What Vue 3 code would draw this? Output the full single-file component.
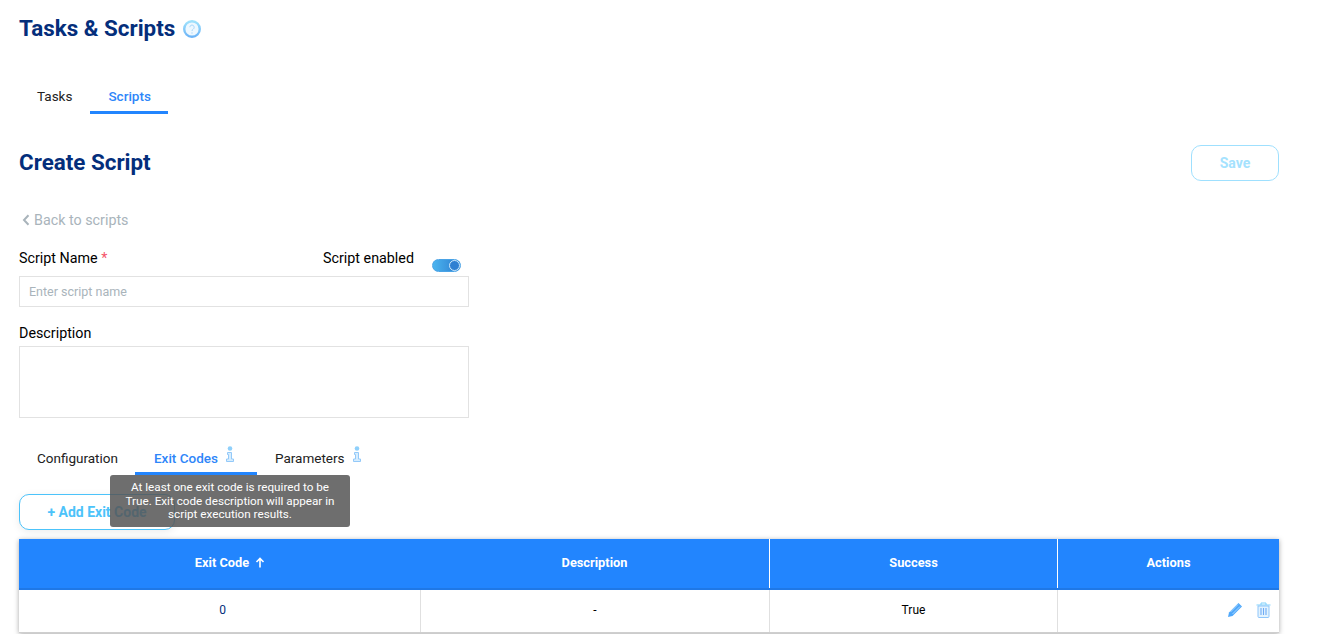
<script setup>
const mainTabs = [{ label: 'Tasks' }, { label: 'Scripts', active: true }]
const subTabs = [
  { label: 'Configuration' },
  { label: 'Exit Codes', active: true, info: true },
  { label: 'Parameters', info: true }
]
</script>

<template>
  <div class="page">
    <header class="title-row">
      <h1>Tasks &amp; Scripts</h1>
      <svg class="help" width="18" height="18" viewBox="0 0 18 18">
        <defs>
          <linearGradient id="helpGrad" x1="0" y1="0" x2="0" y2="1">
            <stop offset="0" stop-color="#9fe2fc" />
            <stop offset="1" stop-color="#6db4f7" />
          </linearGradient>
        </defs>
        <circle cx="9" cy="9" r="7.800" fill="#eef8ff" stroke="url(#helpGrad)" stroke-width="2.400" />
        <path d="M6.800 7.200a2.200 2.200 0 1 1 3.400 1.900c-.8.500-1.200.9-1.200 1.900" fill="none" stroke="#a9d8fb" stroke-width="1" />
        <circle cx="9" cy="13" r=".7" fill="#a9d8fb" />
      </svg>
    </header>

    <nav class="tabs main-tabs">
      <a v-for="t in mainTabs" :key="t.label" class="tab" :class="{ active: t.active }">{{ t.label }}</a>
    </nav>

    <div class="create-row">
      <h2>Create Script</h2>
      <button class="btn save">Save</button>
    </div>

    <a class="back">
      <svg width="8" height="12" viewBox="0 0 8 12"><path d="M6.500 1.200 2 6l4.500 4.800" fill="none" stroke="#a9b4bb" stroke-width="2" /></svg>
      Back to scripts
    </a>

    <section class="form">
      <div class="label-row">
        <label>Script Name <span class="req">*</span></label>
        <div class="enabled">
          <span>Script enabled</span>
          <span class="switch"><span class="knob"></span></span>
        </div>
      </div>
      <input class="field" placeholder="Enter script name" />
      <label class="desc-label">Description</label>
      <textarea class="field area"></textarea>
    </section>

    <nav class="tabs sub-tabs">
      <a v-for="t in subTabs" :key="t.label" class="tab" :class="{ active: t.active }">
        {{ t.label }}
        <svg v-if="t.info" class="info" width="8" height="16" viewBox="0 0 8 16">
          <circle cx="4" cy="2.500" r="2.300" fill="#8fd0fb" />
          <path d="M1.500 6.500h4v6.500h2v2.500H.5V13h2V8.500h-1z" fill="#d6edfe" stroke="#93c9f9" stroke-width="1" />
        </svg>
      </a>
      <div class="tooltip">At least one exit code is required to be True. Exit code description will appear in script execution results.</div>
    </nav>

    <button class="btn add">+ Add Exit Code</button>

    <div class="table">
      <div class="row head">
        <div class="cell span-two">
          <span class="exit-head">Exit Code
            <svg width="10" height="11" viewBox="0 0 10 11"><path d="M5 10.500V1.500M1.500 5 5 1.500 8.500 5" fill="none" stroke="#fff" stroke-width="1.600" /></svg>
          </span>
          <span class="desc-head">Description</span>
        </div>
        <div class="cell">Success</div>
        <div class="cell">Actions</div>
      </div>
      <div class="row body">
        <div class="cell code">0</div>
        <div class="cell">-</div>
        <div class="cell">True</div>
        <div class="cell actions">
          <svg width="16" height="16" viewBox="0 0 16 16">
            <path d="M1 15l1-4.500L11.500 1 15 4.500 5.500 14z" fill="#4fa8fb" />
            <path d="M3.500 10 11 2.500M5.500 12 13 4.500" stroke="#bfe2fe" stroke-width=".8" />
          </svg>
          <svg width="15" height="16" viewBox="0 0 15 16">
            <path d="M.5 3h14M5 3V1h5v2" fill="none" stroke="#7fd0fb" stroke-width="1" />
            <path d="M2 4h11v10.500a1 1 0 0 1-1 1H3a1 1 0 0 1-1-1z" fill="#e3f3fe" stroke="#8fc6fa" stroke-width="1" />
            <path d="M5 6v7M7.500 6v7M10 6v7" stroke="#6fabf4" stroke-width="1.100" />
          </svg>
        </div>
      </div>
    </div>
  </div>
</template>

<style>
html, body { background: #fff; margin: 0; }
</style>

<style scoped>
.page {
  box-sizing: border-box;
  width: 1328px;
  height: 634px;
  padding: 0 49px 0 19px;
  font-family: Roboto, "Liberation Sans", sans-serif;
  font-size: 14.3px;
  color: #000;
  overflow: hidden;
}
.title-row {
  display: flex;
  align-items: center;
  gap: 8px;
  height: 28px;
  padding-top: 14px;
}
h1 {
  margin: 0;
  font-size: 22.4px;
  line-height: 28px;
  font-weight: 700;
  color: #042e7b;
}
.help { margin-top: 2px; }
.tabs {
  display: flex;
  position: relative;
}
.tab {
  display: block;
  box-sizing: border-box;
  padding: 0 18px;
  line-height: 20px;
  color: #222;
  font-size: 13.500px;
  white-space: nowrap;
}
.tab.active {
  color: #2e86f9;
  font-weight: 500;
  border-bottom: 3px solid #2285fe;
}
.main-tabs {
  margin-top: 44px;
  height: 28px;
}
.main-tabs .tab { height: 28px; }
.main-tabs .tab.active { padding-right: 17px; }
.create-row {
  display: flex;
  justify-content: space-between;
  align-items: center;
  margin-top: 31px;
  height: 36px;
}
h2 {
  margin: -2px 0 0;
  font-size: 22.4px;
  font-weight: 700;
  color: #042e7b;
}
.btn {
  box-sizing: border-box;
  background: #fff;
  border-radius: 10px;
  font-family: inherit;
  font-weight: 700;
  font-size: 14px;
  padding: 0;
}
.save {
  width: 88px;
  height: 36px;
  border: 1px solid #9fe0fe;
  color: #a5e2fe;
}
.back {
  display: flex;
  align-items: center;
  gap: 4px;
  margin-top: 29px;
  padding-left: 3px;
  line-height: 20px;
  color: #a9b4bb;
}
.form { width: 450px; margin-top: 18px; }
.label-row {
  display: flex;
  justify-content: space-between;
  height: 20px;
  line-height: 20px;
}
.req { color: #f4546a; }
.enabled {
  display: flex;
  gap: 18px;
  padding-right: 8px;
}
.switch {
  position: relative;
  box-sizing: border-box;
  display: block;
  width: 29px;
  height: 13px;
  margin-top: 11px;
  border-radius: 7px;
  border: 1px solid #4aa3e6;
  background: linear-gradient(90deg, #4ab4ef, #2d7ccf);
}
.knob {
  position: absolute;
  right: 0;
  top: 0;
  box-sizing: border-box;
  width: 11px;
  height: 11px;
  border-radius: 50%;
  border: 1px solid #cfeafc;
  background: #2f80d2;
}
.field {
  display: block;
  box-sizing: border-box;
  width: 450px;
  height: 31px;
  margin-top: 8px;
  padding: 0 9px;
  border: 1px solid #e2e2e2;
  outline: none;
  font-family: inherit;
  font-size: 12.500px;
  background: #fff;
}
.field::placeholder { color: #a9b4bb; opacity: 1; }
.desc-label {
  display: block;
  margin-top: 16px;
  line-height: 20px;
}
.area {
  height: 72px;
  margin-top: 3px;
  resize: none;
}
.sub-tabs {
  margin-top: 28px;
  height: 29px;
}
.sub-tabs .tab {
  height: 29px;
  padding-top: 2px;
  display: flex;
  align-items: flex-start;
  gap: 8px;
}
.sub-tabs .tab.active {
  font-weight: 500;
  margin-left: -1px;
  padding-left: 19px;
}
.info { margin: -2px 5px 0 0; }
.tooltip {
  position: absolute;
  left: 91px;
  top: 29px;
  z-index: 2;
  box-sizing: border-box;
  width: 240px;
  height: 52px;
  padding: 6px 8px;
  border-radius: 3px;
  background: rgba(85, 85, 85, 0.85);
  color: #fff;
  font-size: 11.700px;
  line-height: 13.500px;
  text-align: center;
}
.add {
  display: block;
  width: 156px;
  height: 36px;
  margin-top: 19px;
  border: 1px solid #4cc3fa;
  color: #4cc3fa;
  box-shadow: 0 2px 8px rgba(0, 0, 0, 0.08);
}
.table {
  width: 1260px;
  margin-top: 9px;
  box-shadow: 0 1px 5px rgba(0, 0, 0, 0.35);
}
.row {
  display: grid;
  grid-template-columns: 401px 349px 288px 222px;
}
.cell {
  display: flex;
  align-items: center;
  justify-content: center;
}
.head {
  height: 51px;
  box-sizing: border-box;
  padding-bottom: 2px;
  background: #2285fe;
  border-bottom: 2px solid #1f78e6;
  color: #fff;
  font-size: 12.800px;
  font-weight: 700;
}
.head .cell + .cell { border-left: 1px solid #fff; margin-bottom: -2px; padding-bottom: 2px; }
.span-two {
  grid-column: span 2;
  display: grid;
  grid-template-columns: 401px 349px;
}
.exit-head {
  display: flex;
  align-items: center;
  justify-content: center;
  gap: 6px;
  padding-left: 21px;
}
.desc-head { text-align: center; }
.body {
  height: 43px;
  box-sizing: border-box;
  background: #fff;
  border-bottom: 1px solid #cfcfcf;
  color: #000;
  font-size: 12px;
}
.body .cell { padding-bottom: 3px; }
.body .cell + .cell { border-left: 1px solid #e0e0e0; }
.code { color: #042e7b; padding-left: 6px; }
.actions {
  justify-content: flex-end;
  gap: 13px;
  padding-right: 8px;
}
</style>
